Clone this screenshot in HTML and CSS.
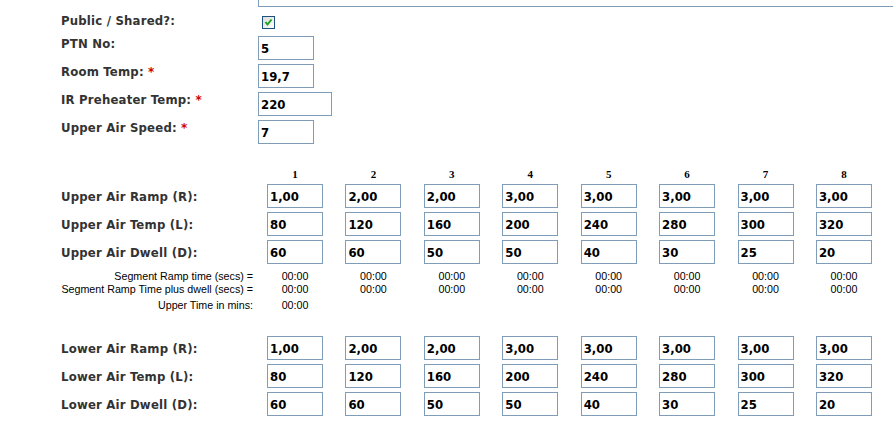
FILE: index.html
```html
<!DOCTYPE html>
<html lang="en">

<head>
    <meta charset="UTF-8">
    <meta name="viewport" content="width=device-width, initial-scale=1.0">
    <title>Profile</title>
    <link rel="stylesheet" href="styles.css">
</head>

<body>
    <div class="notes-box"></div>

    <div class="general">
        <div class="row first">
            <label class="lbl">Public / Shared?:</label>
            <span class="check">
                <svg width="11" height="11" viewBox="0 0 11 11">
                    <path d="M2.5 5 L4.5 7.5 L8.5 2.5" fill="none" stroke="#21a121" stroke-width="2" />
                </svg>
            </span>
        </div>
        <div class="row">
            <label class="lbl">PTN No:</label>
            <input class="field" type="text" value="5">
        </div>
        <div class="row">
            <label class="lbl">Room Temp: <span class="req">*</span></label>
            <input class="field" type="text" value="19,7">
        </div>
        <div class="row">
            <label class="lbl">IR Preheater Temp: <span class="req">*</span></label>
            <input class="field wide" type="text" value="220">
        </div>
        <div class="row">
            <label class="lbl">Upper Air Speed: <span class="req">*</span></label>
            <input class="field" type="text" value="7">
        </div>
    </div>

    <div class="profile">
        <div class="prow head">
            <span></span>
            <b>1</b><b>2</b><b>3</b><b>4</b><b>5</b><b>6</b><b>7</b><b>8</b>
        </div>

        <div class="prow">
            <label class="lbl">Upper Air Ramp (R):</label>
            <input class="field" value="1,00"><input class="field" value="2,00"><input class="field" value="2,00"><input class="field" value="3,00">
            <input class="field" value="3,00"><input class="field" value="3,00"><input class="field" value="3,00"><input class="field" value="3,00">
        </div>
        <div class="prow">
            <label class="lbl">Upper Air Temp (L):</label>
            <input class="field" value="80"><input class="field" value="120"><input class="field" value="160"><input class="field" value="200">
            <input class="field" value="240"><input class="field" value="280"><input class="field" value="300"><input class="field" value="320">
        </div>
        <div class="prow">
            <label class="lbl">Upper Air Dwell (D):</label>
            <input class="field" value="60"><input class="field" value="60"><input class="field" value="50"><input class="field" value="50">
            <input class="field" value="40"><input class="field" value="30"><input class="field" value="25"><input class="field" value="20">
        </div>

        <div class="prow seg first-seg">
            <span class="seg-lbl">Segment Ramp time (secs) =</span>
            <span>00:00</span><span>00:00</span><span>00:00</span><span>00:00</span>
            <span>00:00</span><span>00:00</span><span>00:00</span><span>00:00</span>
        </div>
        <div class="prow seg">
            <span class="seg-lbl">Segment Ramp Time plus dwell (secs) =</span>
            <span>00:00</span><span>00:00</span><span>00:00</span><span>00:00</span>
            <span>00:00</span><span>00:00</span><span>00:00</span><span>00:00</span>
        </div>
        <div class="prow seg total">
            <span class="seg-lbl">Upper Time in mins:</span>
            <span>00:00</span>
        </div>

        <div class="prow lower-start">
            <label class="lbl">Lower Air Ramp (R):</label>
            <input class="field" value="1,00"><input class="field" value="2,00"><input class="field" value="2,00"><input class="field" value="3,00">
            <input class="field" value="3,00"><input class="field" value="3,00"><input class="field" value="3,00"><input class="field" value="3,00">
        </div>
        <div class="prow">
            <label class="lbl">Lower Air Temp (L):</label>
            <input class="field" value="80"><input class="field" value="120"><input class="field" value="160"><input class="field" value="200">
            <input class="field" value="240"><input class="field" value="280"><input class="field" value="300"><input class="field" value="320">
        </div>
        <div class="prow">
            <label class="lbl">Lower Air Dwell (D):</label>
            <input class="field" value="60"><input class="field" value="60"><input class="field" value="50"><input class="field" value="50">
            <input class="field" value="40"><input class="field" value="30"><input class="field" value="25"><input class="field" value="20">
        </div>
    </div>
</body>

</html>
```

FILE: styles.css
```css
body {
    margin: 0;
    padding: 0;
    background-color: #fff;
    overflow: hidden;
    font-family: "DejaVu Sans Condensed", "DejaVu Sans", sans-serif;
    font-stretch: condensed;
}

.notes-box {
    margin-left: 258px;
    height: 6px;
    border-left: 1px solid #7f9db9;
    border-bottom: 1px solid #7f9db9;
}

.general {
    margin-left: 61px;
    margin-top: 6px;
}

.row {
    display: flex;
    align-items: flex-start;
    height: 28px;
}

.row.first {
    height: 23px;
}

.general .lbl {
    width: 197px;
    flex-shrink: 0;
}

.lbl {
    font-size: 13px;
    font-weight: bold;
    color: #333;
    line-height: 15px;
    letter-spacing: 0.2px;
    white-space: nowrap;
}

.req {
    color: #d00000;
    font-size: 12px;
    font-weight: bold;
    font-family: "DejaVu Sans", sans-serif;
    font-stretch: normal;
    letter-spacing: 0;
}

.check {
    display: inline-block;
    box-sizing: border-box;
    width: 13px;
    height: 13px;
    margin: 3px 0 0 4px;
    border: 1px solid #1c5180;
    background: linear-gradient(135deg, #dcdcd7, #fff);
}

.check svg {
    display: block;
}

.field {
    box-sizing: border-box;
    width: 56px;
    height: 24px;
    margin: 0;
    padding: 0 2px;
    border: 1px solid #7f9db9;
    border-radius: 0;
    font-family: "DejaVu Sans Condensed", "DejaVu Sans", sans-serif;
    font-stretch: condensed;
    font-size: 13px;
    font-weight: bold;
    color: #000;
    background: #fff;
    outline: none;
}

.field.wide {
    width: 74px;
}

.profile {
    margin-left: 61px;
    margin-top: 20px;
}

.prow {
    display: grid;
    grid-template-columns: 206px repeat(8, 78.43px);
    align-items: start;
    height: 28px;
}

.prow .lbl {
    margin-top: 5px;
}

.prow.head {
    height: 16px;
}

.prow.head b {
    width: 56px;
    text-align: center;
    font-family: "Liberation Serif", "Times New Roman", serif;
    font-size: 11px;
    line-height: 13px;
    color: #000;
}

.prow.seg {
    height: 13px;
    font-family: "Liberation Sans", Arial, sans-serif;
    font-size: 10.7px;
    line-height: 13px;
    color: #000;
}

.prow.seg span {
    width: 56px;
    text-align: center;
}

.prow.seg .seg-lbl {
    width: auto;
    text-align: right;
    padding-right: 14px;
    white-space: nowrap;
}

.prow.first-seg {
    margin-top: 2px;
}

.prow.total {
    margin-top: 3px;
}

.prow.lower-start {
    margin-top: 24px;
}
```
